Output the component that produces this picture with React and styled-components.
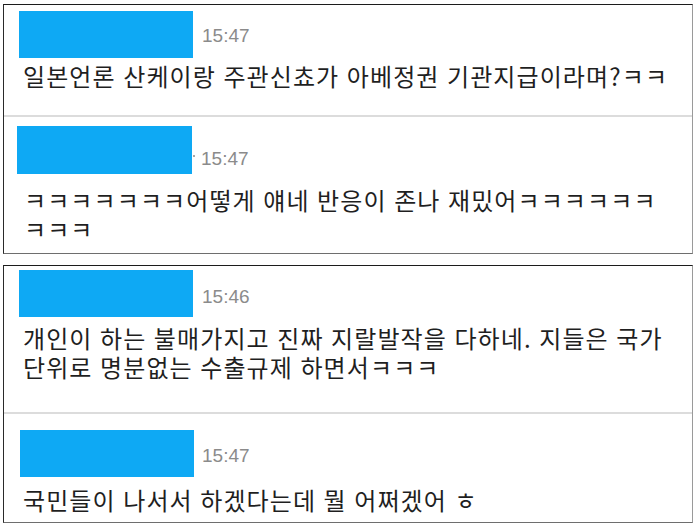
import React from "react";
import styled, { createGlobalStyle } from "styled-components";

const Global = createGlobalStyle`
  html, body { margin: 0; padding: 0; background: #ffffff; }
  body { width: 700px; height: 528px; overflow: hidden; }
`;

const Page = styled.div`
  display: flex;
  flex-direction: column;
  gap: 11px;
  padding: 4px 7px 0 3px;
  width: 700px;
  box-sizing: border-box;
`;

const Panel = styled.section`
  display: flex;
  flex-direction: column;
  border-top: 1px solid #1c1c1c;
  border-left: 1px solid #2a2a2a;
  border-right: 1px solid #9a9a9a;
  border-bottom: 1px solid #6e6e6e;
  background: #ffffff;
`;

const Message = styled.article`
  display: flex;
  flex-direction: column;
  padding: ${(p) => p.$pt}px 0 ${(p) => p.$pb}px ${(p) => p.$indent}px;
  border-top: ${(p) => (p.$first ? "none" : "2px solid #dcdcdc")};
`;

const Header = styled.div`
  display: flex;
  align-items: flex-start;
`;

const NameMask = styled.div`
  position: relative;
  width: ${(p) => p.$w}px;
  height: ${(p) => p.$h}px;
  background: #0ea9f4;
  flex: none;
  &::after {
    content: "";
    display: ${(p) => (p.$dot ? "block" : "none")};
    position: absolute;
    right: -3px;
    top: 29px;
    width: 2px;
    height: 2px;
    border-radius: 1px;
    background: #8a8a8a;
  }
`;

const Time = styled.span`
  margin-left: ${(p) => p.$gap}px;
  margin-top: ${(p) => p.$mt}px;
  font-family: "Liberation Sans", Arial, sans-serif;
  font-size: 19px;
  line-height: 22px;
  color: #8b8b8b;
`;

const Body = styled.p`
  margin: ${(p) => p.$gap}px 0 0 ${(p) => p.$tx}px;
  font-family: "Noto Sans CJK KR", "Noto Sans", sans-serif;
  font-size: 24px;
  line-height: 29.5px;
  letter-spacing: 1.1px;
  word-spacing: 1px;
  color: #1f1f1f;
  white-space: nowrap;
`;

const panels = [
  [
    {
      first: true,
      pt: 6,
      pb: 24,
      indent: 15,
      w: 174,
      h: 47,
      time: "15:47",
      tmt: 14,
      tgap: 9,
      gap: 3,
      tx: 4,
      lines: ["일본언론 산케이랑 주관신쵸가 아베정권 기관지급이라며?ㅋㅋ"],
    },
    {
      pt: 9,
      pb: 9,
      indent: 13,
      w: 175,
      h: 48,
      dot: true,
      time: "15:47",
      tmt: 22,
      tgap: 9,
      gap: 11,
      tx: 7,
      lines: [
        "ㅋㅋㅋㅋㅋㅋㅋ어떻게 얘네 반응이 존나 재밌어ㅋㅋㅋㅋㅋㅋ",
        "ㅋㅋㅋ",
      ],
    },
  ],
  [
    {
      first: true,
      pt: 4,
      pb: 30,
      indent: 15,
      w: 174,
      h: 47,
      time: "15:46",
      tmt: 16,
      tgap: 9,
      gap: 6,
      tx: 4,
      lines: [
        "개인이 하는 불매가지고 진짜 지랄발작을 다하네. 지들은 국가",
        "단위로 명분없는 수출규제 하면서ㅋㅋㅋ",
      ],
    },
    {
      pt: 16,
      pb: 8,
      indent: 16,
      w: 174,
      h: 47,
      time: "15:47",
      tmt: 15,
      tgap: 8,
      gap: 8,
      tx: 3,
      lines: ["국민들이 나서서 하겠다는데 뭘 어쩌겠어 ㅎ"],
    },
  ],
];

export default function App() {
  return (
    <>
      <Global />
      <Page>
        {panels.map((msgs, i) => (
          <Panel key={i}>
            {msgs.map((m, j) => (
              <Message
                key={j}
                $first={m.first}
                $pt={m.pt}
                $pb={m.pb}
                $indent={m.indent}
              >
                <Header>
                  <NameMask $w={m.w} $h={m.h} $dot={m.dot} />
                  <Time $mt={m.tmt} $gap={m.tgap}>
                    {m.time}
                  </Time>
                </Header>
                <Body $gap={m.gap} $tx={m.tx}>
                  {m.lines.map((l, k) => (
                    <React.Fragment key={k}>
                      {k > 0 && <br />}
                      {l}
                    </React.Fragment>
                  ))}
                </Body>
              </Message>
            ))}
          </Panel>
        ))}
      </Page>
    </>
  );
}
